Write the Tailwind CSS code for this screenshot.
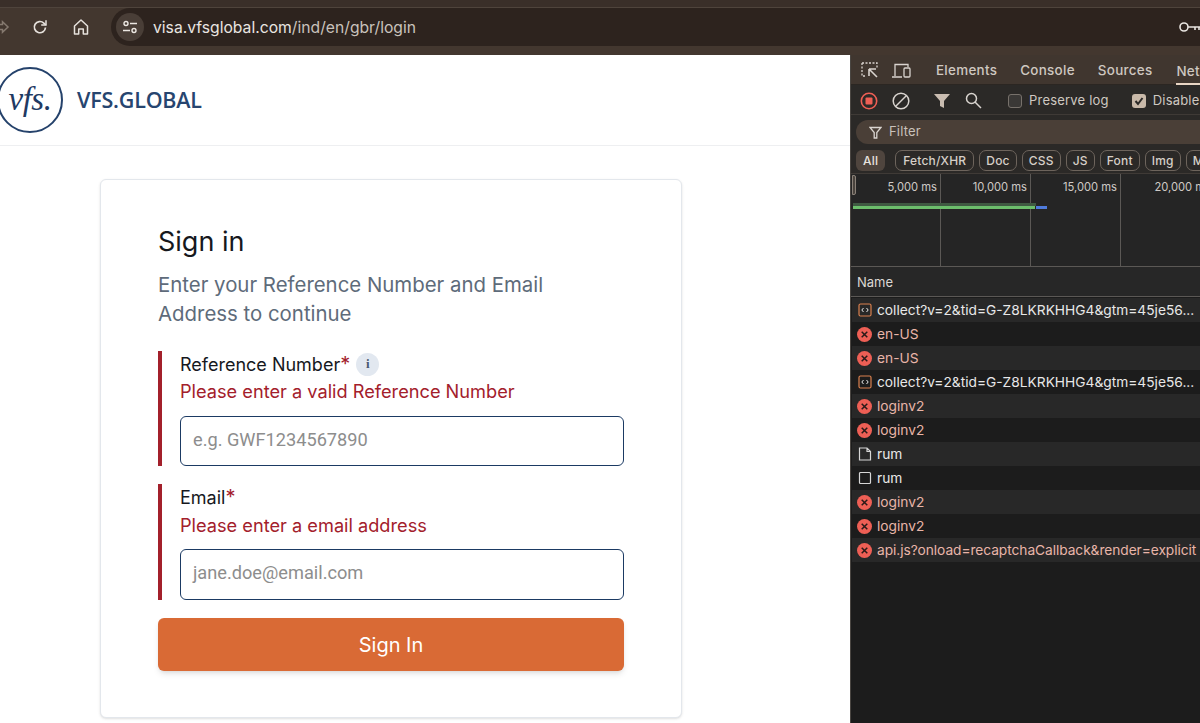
<!DOCTYPE html>
<html lang="en">
<head>
    <meta charset="UTF-8">
    <meta name="viewport" content="width=device-width, initial-scale=1.0">
    <title>VFS Global Login</title>
    <script src="https://cdn.jsdelivr.net/npm/@tailwindcss/browser@4"></script>
</head>
<body class="bg-white overflow-hidden font-['Inter',sans-serif]">
<div class="w-[1200px] h-[723px] flex flex-col overflow-hidden">

    <!-- Browser bar -->
    <div class="h-[55px] shrink-0 bg-[#43372f] flex flex-col">
        <div class="h-[8px] bg-[#3a2f29] border-b border-[#4f443c]"></div>
        <div class="h-[38px] flex items-center">
            <svg class="w-[10px] h-[14px] shrink-0 text-[#85796f]" viewBox="0 0 10 14" fill="none" stroke="currentColor" stroke-width="1.5"><path d="M0 4.500h2.500V1.800L8 7l-5.500 5.200V9.500H0"/></svg>
            <svg class="w-[18px] h-[18px] ml-[21px] text-[#e6e1dc]" viewBox="0 0 18 18" fill="none" stroke="currentColor" stroke-width="1.700"><path d="M14.500 9.500a5.600 5.600 0 1 1-1.700-4.400L14.800 7"/><path d="M15 2.200V7h-4.800" stroke-width="1.500"/></svg>
            <svg class="w-[18px] h-[18px] ml-[23px] text-[#e6e1dc]" viewBox="0 0 18 18" fill="none" stroke="currentColor" stroke-width="1.500"><path d="M2.500 8 9 2l6.500 6v8h-4.200v-5H6.700v5H2.500z" stroke-linejoin="round"/></svg>
            <div class="ml-[21px] flex-1 h-[38px] bg-[#2d231e] rounded-l-[19px] flex items-center pl-[5px]">
                <div class="w-[28px] h-[28px] rounded-full bg-[#493e37] flex items-center justify-center">
                    <svg class="w-[16px] h-[14px] text-[#ece7e2]" viewBox="0 0 16 14" fill="none" stroke="currentColor" stroke-width="1.400"><circle cx="4" cy="3.500" r="2"/><path d="M8 3.500h7M1 10.500h7"/><circle cx="12" cy="10.500" r="2"/></svg>
                </div>
                <span class="ml-[9px] pt-[1px] text-[15.700px] text-[#e9e5e1]">visa.vfsglobal.com<span class="text-[#c9c2bc]">/ind/en/gbr/login</span></span>
                <svg class="w-[22px] h-[12px] ml-auto text-[#e9e5e1] shrink-0" viewBox="0 0 22 12" fill="none" stroke="currentColor" stroke-width="1.600"><circle cx="6" cy="6" r="4"/><path d="M10 6h12M17 6v3M21 6v3"/></svg>
            </div>
        </div>
    </div>

    <div class="flex-1 flex min-h-0">
        <!-- Page -->
        <div class="w-[850px] shrink-0 bg-white overflow-hidden">
            <header class="h-[91px] border-b border-[#eeeff1] flex items-center pb-[1px]">
                <div class="-ml-[3px] w-[66px] h-[66px] rounded-full border-2 border-[#25426b] shrink-0 flex items-center justify-center">
                    <span class="font-['Liberation_Serif',serif] italic text-[#1f3a63] text-[33px] leading-none tracking-[-0.5px]">vfs.</span>
                </div>
                <span class="ml-[14px] mt-[2px] text-[21.500px] font-semibold text-[#27456f] tracking-[-0.2px] font-['Open_Sans',sans-serif]">VFS.GLOBAL</span>
            </header>

            <main class="pt-[33px] pl-[100px]">
                <div class="w-[582px] h-[539px] bg-white border border-[#e3e7ec] rounded-[6px] shadow-sm pt-[45px] px-[57px]">
                    <h1 class="text-[27px] leading-[34px] text-[#16181d]">Sign in</h1>
                    <p class="mt-[11px] w-[420px] text-[20.400px] leading-[29px] text-[#5e6b7a]">Enter your Reference Number and Email Address to continue</p>

                    <div class="mt-[23px] border-l-4 border-[#a3202b] pl-[18px] h-[115px]">
                        <div class="flex items-center h-[26px]">
                            <label class="text-[18px] text-[#16181d]">Reference Number<span class="text-[#a3202b] text-[20px] leading-none">*</span></label>
                            <span class="ml-[6px] w-[23px] h-[23px] rounded-full bg-[#e2e8f0] flex items-center justify-center text-[13px] font-bold text-[#4a5a70] font-['Liberation_Serif',serif]">i</span>
                        </div>
                        <p class="text-[18.200px] leading-[28px] text-[#a3202b]">Please enter a valid Reference Number</p>
                        <div class="mt-[11px] h-[50px] w-[444px] border-[1.500px] border-[#1b3a63] rounded-[6px] flex items-center pl-[12px] pb-[3px] text-[18.200px] text-[#8d8d8d] font-['Roboto',sans-serif]">e.g. GWF1234567890</div>
                    </div>

                    <div class="mt-[18px] border-l-4 border-[#a3202b] pl-[18px] h-[116px]">
                        <div class="flex items-center h-[26px]">
                            <label class="text-[18px] text-[#16181d]">Email<span class="text-[#a3202b] text-[20px] leading-none">*</span></label>
                        </div>
                        <p class="pt-[1px] text-[18.200px] leading-[28px] text-[#a3202b]">Please enter a email address</p>
                        <div class="mt-[10px] h-[51px] w-[444px] border-[1.500px] border-[#1b3a63] rounded-[6px] flex items-center pl-[12px] pb-[3px] text-[18.200px] text-[#8d8d8d] font-['Roboto',sans-serif]">jane.doe@email.com</div>
                    </div>

                    <button class="mt-[18px] w-[466px] h-[53px] bg-[#d96a35] rounded-[6px] shadow-md text-white text-[20px]">Sign In</button>
                </div>
            </main>
        </div>

        <!-- Devtools -->
        <div class="flex-1 min-w-0 bg-[#1c1c1c] border-l border-[#4a4642] flex flex-col text-[13px] overflow-hidden">
            <div class="h-[30px] shrink-0 bg-[#40362f] flex items-center whitespace-nowrap border-b border-[#2b2622] pt-[2px]">
                <svg class="ml-[10px] w-[18px] h-[17px] shrink-0 text-[#d9d4cf]" viewBox="0 0 18 17" fill="none" stroke="currentColor" stroke-width="1.300"><path d="M1 1h15v5M1 1v13h4" stroke-dasharray="2 1.500"/><path d="M8 7h7M8 7v7M8 7l8 8" stroke-width="1.600"/></svg>
                <svg class="ml-[13px] w-[19px] h-[16px] shrink-0 text-[#d9d4cf]" viewBox="0 0 19 16" fill="none" stroke="currentColor" stroke-width="1.300"><path d="M3 13V1.500h13V4M0 14h10"/><rect x="12" y="5" width="6" height="9" rx="1"/></svg>
                <div class="ml-[10px] w-px h-[18px] bg-[#5d524a]"></div>
                <span class="ml-[15px] text-[13.400px] text-[#cfc8c1] font-medium tracking-[0.3px]">Elements</span>
                <span class="ml-[23px] text-[13.400px] text-[#cfc8c1] font-medium tracking-[0.3px]">Console</span>
                <span class="ml-[23px] text-[13.400px] text-[#cfc8c1] font-medium tracking-[0.3px]">Sources</span>
                <span class="ml-[24px] text-[13.400px] text-[#cfc8c1] font-medium tracking-[0.3px] pr-[30px] border-b-2 border-[#e8d5c4] h-[28px] leading-[28px]">Network</span>
            </div>
            <div class="h-[30px] shrink-0 bg-[#2b2927] flex items-center whitespace-nowrap border-b border-[#3f3a36] pt-[2px]">
                <svg class="ml-[9px] w-[18px] h-[18px] shrink-0" viewBox="0 0 18 18" fill="none"><circle cx="9" cy="9" r="7.700" stroke="#ee5f55" stroke-width="1.600"/><rect x="5.500" y="5.500" width="7" height="7" rx="1" fill="#ee5f55"/></svg>
                <svg class="ml-[14px] w-[18px] h-[18px] shrink-0 text-[#d9d4cf]" viewBox="0 0 18 18" fill="none" stroke="currentColor" stroke-width="1.500"><circle cx="9" cy="9" r="7.800"/><path d="M3.500 14.500l11-11"/></svg>
                <div class="ml-[11px] w-px h-[18px] bg-[#5d524a]"></div>
                <svg class="ml-[13px] w-[16px] h-[16px] shrink-0 text-[#c9bcb0]" viewBox="0 0 16 16" fill="currentColor"><path d="M0 1h16l-6 7v7l-4-2V8z"/></svg>
                <svg class="ml-[15px] w-[17px] h-[17px] shrink-0 text-[#d9d4cf]" viewBox="0 0 17 17" fill="none" stroke="currentColor" stroke-width="1.500"><circle cx="6.500" cy="6.500" r="5"/><path d="M10 10l6 6"/></svg>
                <div class="ml-[12px] w-px h-[18px] bg-[#5d524a]"></div>
                <span class="ml-[14px] w-[14px] h-[14px] rounded-[3px] border border-[#77716b] bg-[#3a3836] shrink-0"></span>
                <span class="ml-[7px] text-[#cfc8c1] tracking-[0.2px]">Preserve log</span>
                <div class="ml-[11px] w-px h-[18px] bg-[#5d524a]"></div>
                <span class="ml-[12px] w-[14px] h-[14px] rounded-[3px] bg-[#c9b9a9] shrink-0 flex items-center justify-center">
                    <svg class="w-[10px] h-[10px] text-[#2b2927]" viewBox="0 0 10 10" fill="none" stroke="currentColor" stroke-width="2"><path d="M1.500 5l2.500 3 4.500-6"/></svg>
                </span>
                <span class="ml-[7px] text-[#cfc8c1] tracking-[0.2px]">Disable cache</span>
            </div>
            <div class="h-[32px] shrink-0 bg-[#2b2927] flex items-center pl-[5px] pt-[2px]">
                <div class="w-full h-[24px] rounded-l-[12px] bg-[#4a3f37] flex items-center pl-[13px]">
                    <svg class="w-[13px] h-[13px] text-[#d9d4cf]" viewBox="0 0 13 13" fill="none" stroke="currentColor" stroke-width="1.300"><path d="M1 1.500h11L7.800 6.500v5.500H5.200V6.500z"/></svg>
                    <span class="ml-[7px] text-[#c9c2bb] tracking-[0.2px]">Filter</span>
                </div>
            </div>
            <div class="h-[27px] shrink-0 bg-[#2b2927] flex items-center pl-[5px] gap-[5px] whitespace-nowrap text-[12px] font-medium text-[#d6cfc8] tracking-[0.2px] border-b border-[#3f3a36]">
                <span class="h-[21px] px-[7px] leading-[21px] rounded-[6px] bg-[#4f453e] text-[#e8e3de]">All</span>
                <div class="w-px h-[18px] bg-[#4f4740]"></div>
                <span class="h-[21px] px-[7px] leading-[19px] rounded-[7px] border border-[#6d645c]">Fetch/XHR</span>
                <span class="h-[21px] px-[6px] leading-[19px] rounded-[7px] border border-[#6d645c]">Doc</span>
                <span class="h-[21px] px-[6px] leading-[19px] rounded-[7px] border border-[#6d645c]">CSS</span>
                <span class="h-[21px] px-[6px] leading-[19px] rounded-[7px] border border-[#6d645c]">JS</span>
                <span class="h-[21px] px-[6px] leading-[19px] rounded-[7px] border border-[#6d645c]">Font</span>
                <span class="h-[21px] px-[6px] leading-[19px] rounded-[7px] border border-[#6d645c]">Img</span>
                <span class="h-[21px] px-[6px] leading-[19px] rounded-[7px] border border-[#6d645c]">Media</span>
            </div>

            <!-- Timeline -->
            <div class="relative h-[93px] shrink-0 bg-[#252525] border-b border-[#5b5855] flex text-[11.200px] text-[#cfcac5] whitespace-nowrap">
                <div class="w-[90px] shrink-0 border-r border-[#5b5855] text-right pr-[3px] pt-[5px]">5,000 ms</div>
                <div class="w-[90px] shrink-0 border-r border-[#5b5855] text-right pr-[3px] pt-[5px]">10,000 ms</div>
                <div class="w-[90px] shrink-0 border-r border-[#5b5855] text-right pr-[3px] pt-[5px]">15,000 ms</div>
                <div class="w-[90px] shrink-0 text-right pl-[31px] pt-[5px]">20,000 ms</div>
                <div class="absolute left-[1px] top-[1px] w-[4px] h-[20px] bg-[#4a443e] border border-[#8a8178] rounded-r-[2px]"></div>
                <div class="absolute left-[2px] top-[29px] w-[183px] h-[3px] bg-[#3f5a42]"></div>
                <div class="absolute left-[2px] top-[32px] w-[182px] h-[3px] bg-[#6cbf6c]"></div>
                <div class="absolute left-[185px] top-[32px] w-[11px] h-[3px] bg-[#4f7bdc]"></div>
            </div>
            <div class="h-[30px] shrink-0 bg-[#272727] border-b border-[#5b5855] flex items-center pl-[6px] pt-[2px] text-[#dcd8d4]">Name</div>

            <!-- Requests -->
            <div class="flex-1 bg-[#1c1c1c] text-[13.750px] whitespace-nowrap pl-[1px] pt-[1px]">
                <div class="h-[24px] bg-[#282828] flex items-center pl-[6px] text-[#e8e8e8]">
                    <svg class="w-[14px] h-[14px] shrink-0" viewBox="0 0 14 14" fill="none" stroke="#d9804f" stroke-width="1.200"><rect x="1" y="1" width="12" height="12" rx="1.500"/><path d="M5.500 5 3.800 7l1.700 2M8.500 5l1.700 2-1.700 2" stroke="#e8e8e8" stroke-width="1"/></svg>
                    <span class="ml-[5px]">collect?v=2&amp;tid=G-Z8LKRKHHG4&amp;gtm=45je56...</span>
                </div>
                <div class="h-[24px] bg-[#1c1c1c] flex items-center pl-[5px] text-[#e9b5a8]">
                    <svg class="w-[15px] h-[15px] shrink-0" viewBox="0 0 15 15"><circle cx="7.500" cy="7.500" r="7.500" fill="#ee5f55"/><path d="M4.700 4.700l5.600 5.600M10.300 4.700l-5.600 5.600" stroke="#2a1a18" stroke-width="1.500"/></svg>
                    <span class="ml-[5px]">en-US</span>
                </div>
                <div class="h-[24px] bg-[#282828] flex items-center pl-[5px] text-[#e9b5a8]">
                    <svg class="w-[15px] h-[15px] shrink-0" viewBox="0 0 15 15"><circle cx="7.500" cy="7.500" r="7.500" fill="#ee5f55"/><path d="M4.700 4.700l5.600 5.600M10.300 4.700l-5.600 5.600" stroke="#2a1a18" stroke-width="1.500"/></svg>
                    <span class="ml-[5px]">en-US</span>
                </div>
                <div class="h-[24px] bg-[#1c1c1c] flex items-center pl-[6px] text-[#e8e8e8]">
                    <svg class="w-[14px] h-[14px] shrink-0" viewBox="0 0 14 14" fill="none" stroke="#d9804f" stroke-width="1.200"><rect x="1" y="1" width="12" height="12" rx="1.500"/><path d="M5.500 5 3.800 7l1.700 2M8.500 5l1.700 2-1.700 2" stroke="#e8e8e8" stroke-width="1"/></svg>
                    <span class="ml-[5px]">collect?v=2&amp;tid=G-Z8LKRKHHG4&amp;gtm=45je56...</span>
                </div>
                <div class="h-[24px] bg-[#282828] flex items-center pl-[5px] text-[#e9b5a8]">
                    <svg class="w-[15px] h-[15px] shrink-0" viewBox="0 0 15 15"><circle cx="7.500" cy="7.500" r="7.500" fill="#ee5f55"/><path d="M4.700 4.700l5.600 5.600M10.300 4.700l-5.600 5.600" stroke="#2a1a18" stroke-width="1.500"/></svg>
                    <span class="ml-[5px]">loginv2</span>
                </div>
                <div class="h-[24px] bg-[#1c1c1c] flex items-center pl-[5px] text-[#e9b5a8]">
                    <svg class="w-[15px] h-[15px] shrink-0" viewBox="0 0 15 15"><circle cx="7.500" cy="7.500" r="7.500" fill="#ee5f55"/><path d="M4.700 4.700l5.600 5.600M10.300 4.700l-5.600 5.600" stroke="#2a1a18" stroke-width="1.500"/></svg>
                    <span class="ml-[5px]">loginv2</span>
                </div>
                <div class="h-[24px] bg-[#282828] flex items-center pl-[6px] text-[#e8e8e8]">
                    <svg class="w-[14px] h-[14px] shrink-0" viewBox="0 0 14 14" fill="none" stroke="#d6d6d6" stroke-width="1.200"><path d="M1.500 1h7.500l3.500 3.500V13h-11zM9 1v3.500h3.500"/></svg>
                    <span class="ml-[5px]">rum</span>
                </div>
                <div class="h-[24px] bg-[#1c1c1c] flex items-center pl-[6px] text-[#e8e8e8]">
                    <svg class="w-[14px] h-[14px] shrink-0" viewBox="0 0 14 14" fill="none" stroke="#d6d6d6" stroke-width="1.200"><rect x="1.500" y="1.500" width="11" height="11" rx="1"/></svg>
                    <span class="ml-[5px]">rum</span>
                </div>
                <div class="h-[24px] bg-[#282828] flex items-center pl-[5px] text-[#e9b5a8]">
                    <svg class="w-[15px] h-[15px] shrink-0" viewBox="0 0 15 15"><circle cx="7.500" cy="7.500" r="7.500" fill="#ee5f55"/><path d="M4.700 4.700l5.600 5.600M10.300 4.700l-5.600 5.600" stroke="#2a1a18" stroke-width="1.500"/></svg>
                    <span class="ml-[5px]">loginv2</span>
                </div>
                <div class="h-[24px] bg-[#1c1c1c] flex items-center pl-[5px] text-[#e9b5a8]">
                    <svg class="w-[15px] h-[15px] shrink-0" viewBox="0 0 15 15"><circle cx="7.500" cy="7.500" r="7.500" fill="#ee5f55"/><path d="M4.700 4.700l5.600 5.600M10.300 4.700l-5.600 5.600" stroke="#2a1a18" stroke-width="1.500"/></svg>
                    <span class="ml-[5px]">loginv2</span>
                </div>
                <div class="h-[24px] bg-[#282828] flex items-center pl-[5px] text-[#e9b5a8]">
                    <svg class="w-[15px] h-[15px] shrink-0" viewBox="0 0 15 15"><circle cx="7.500" cy="7.500" r="7.500" fill="#ee5f55"/><path d="M4.700 4.700l5.600 5.600M10.300 4.700l-5.600 5.600" stroke="#2a1a18" stroke-width="1.500"/></svg>
                    <span class="ml-[5px] tracking-[-0.065px]">api.js?onload=recaptchaCallback&amp;render=explicit</span>
                </div>
            </div>
        </div>
    </div>
</div>
</body>
</html>
